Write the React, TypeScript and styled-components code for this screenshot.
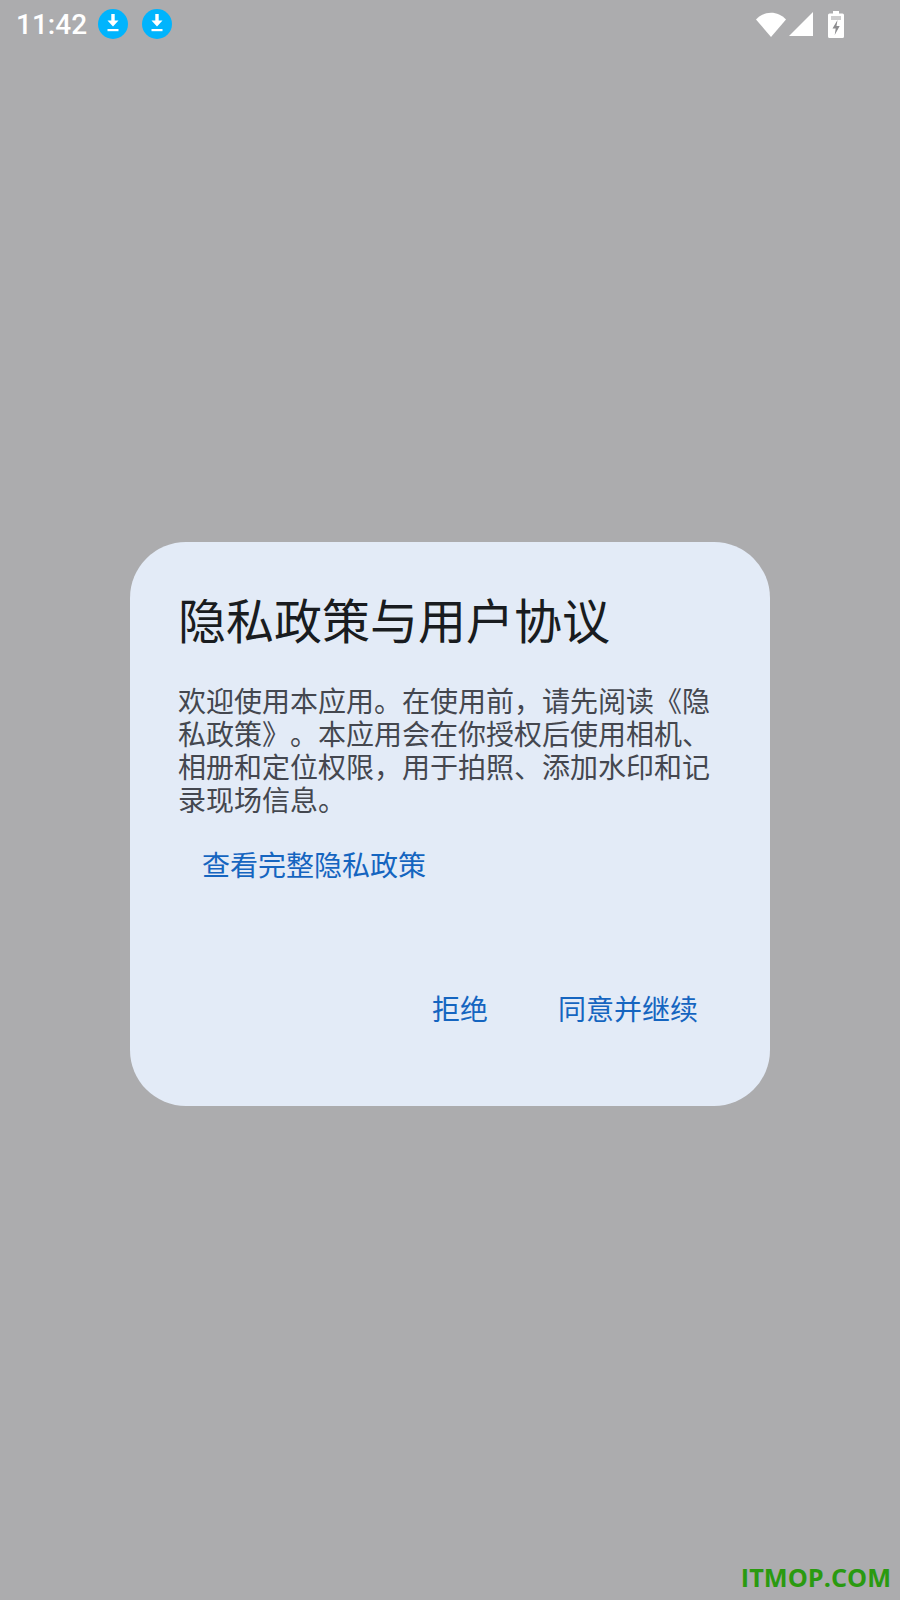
import React from 'react'
import styled, { createGlobalStyle } from 'styled-components'

const GlobalStyle = createGlobalStyle`
  html, body {
    margin: 0;
    padding: 0;
    background: #acacae;
  }
`

const CJK = `"Noto Sans CJK SC", "Noto Sans", sans-serif`

const Screen = styled.div`
  position: relative;
  width: 900px;
  height: 1600px;
  overflow: hidden;
  background: #acacae;
  font-family: ${CJK};
  text-spacing-trim: space-all;
  font-kerning: none;
`

const StatusBar = styled.div`
  height: 48px;
  display: flex;
  align-items: center;
  padding: 0 0 0 16px;
  color: #fff;
`

const Clock = styled.span`
  font-family: Roboto, sans-serif;
  font-size: 28px;
  font-weight: 500;
  width: 82px;
`

const DownloadBadge = styled.span`
  width: 30px;
  height: 30px;
  margin-right: 14px;
  border-radius: 50%;
  background: #00b4fd;
  display: flex;
  align-items: center;
  justify-content: center;
`

const StatusIcons = styled.div`
  margin-left: auto;
  margin-right: 56px;
  display: flex;
  align-items: center;
  gap: 3px;
`

const BatteryGlyph = styled.svg`
  margin-left: 12px;
`

const Scrim = styled.div`
  padding-top: 494px;
  display: flex;
  justify-content: center;
`

const Dialog = styled.div`
  box-sizing: border-box;
  width: 640px;
  height: 564px;
  padding: 44px 48px 0;
  border-radius: 56px;
  background: #e3ebf7;
  display: flex;
  flex-direction: column;
`

const Title = styled.h1`
  margin: 0;
  font-size: 48px;
  font-weight: 400;
  line-height: 64px;
  color: #191c20;
`

const Body = styled.p`
  margin: 34px 0 0;
  font-size: 28px;
  line-height: 33px;
  color: #44474f;
`

const LinkButton = styled.div`
  margin: 28px 0 0 24px;
  font-size: 28px;
  line-height: 40px;
  color: #1565c0;
`

const Actions = styled.div`
  margin-top: 104px;
  display: flex;
  justify-content: flex-end;
  gap: 70px;
  padding-right: 24px;
`

const ActionButton = styled.div`
  font-size: 28px;
  line-height: 40px;
  color: #1565c0;
`

const Watermark = styled.div`
  position: absolute;
  right: 9px;
  bottom: 6px;
  font-family: "Open Sans", sans-serif;
  font-size: 25.3px;
  font-weight: 700;
  color: #2a9a10;
`

function DownloadIcon() {
  return (
    <svg width="14" height="20" viewBox="0 0 14 20" fill="#fff">
      <path d="M5.300 0h3.400v6.500h3.800L7 12.500 1.500 6.500h3.800z" />
      <rect x="1.500" y="15" width="11" height="2.200" />
    </svg>
  )
}

function WifiIcon() {
  return (
    <svg width="30" height="25" viewBox="0 0 30 25" fill="#fff">
      <path d="M0 7.500C8 -1.500 22 -1.500 30 7.500L15 25z" />
    </svg>
  )
}

function SignalIcon() {
  return (
    <svg width="24" height="24" viewBox="0 0 24 24" fill="#fff">
      <path d="M24 0v24H0z" />
    </svg>
  )
}

function BatteryIcon() {
  return (
    <BatteryGlyph width="16" height="27" viewBox="0 0 16 27">
      <path
        fill="#fff"
        d="M5 0h6v2.500h3.500q1.500 0 1.500 1.500v21.500q0 1.500-1.500 1.500h-13q-1.500 0-1.500-1.500v-21.500q0-1.500 1.500-1.500h3.500z"
      />
      <path fill="#acacae" d="M3 5h10v4h-10z" opacity="0.6" />
      <path fill="#8d8d90" d="M9.500 9l-5 8.500h3.200l-1 6.500 5-9h-3.200z" />
    </BatteryGlyph>
  )
}

export default function App() {
  return (
    <Screen>
      <GlobalStyle />
      <StatusBar>
        <Clock>11:42</Clock>
        <DownloadBadge>
          <DownloadIcon />
        </DownloadBadge>
        <DownloadBadge>
          <DownloadIcon />
        </DownloadBadge>
        <StatusIcons>
          <WifiIcon />
          <SignalIcon />
          <BatteryIcon />
        </StatusIcons>
      </StatusBar>
      <Scrim>
        <Dialog>
          <Title>隐私政策与用户协议</Title>
          <Body>
            欢迎使用本应用。在使用前，请先阅读《隐私政策》。本应用会在你授权后使用相机、相册和定位权限，用于拍照、添加水印和记录现场信息。
          </Body>
          <LinkButton>查看完整隐私政策</LinkButton>
          <Actions>
            <ActionButton>拒绝</ActionButton>
            <ActionButton>同意并继续</ActionButton>
          </Actions>
        </Dialog>
      </Scrim>
      <Watermark>ITMOP.COM</Watermark>
    </Screen>
  )
}
